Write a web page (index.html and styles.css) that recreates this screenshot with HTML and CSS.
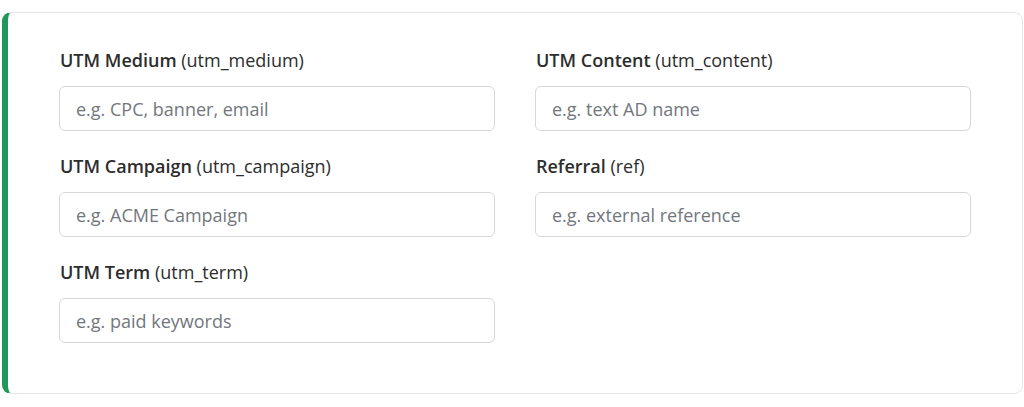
FILE: index.html
```html
<!DOCTYPE html>
<html lang="en">
<head>
    <meta charset="UTF-8">
    <meta name="viewport" content="width=device-width, initial-scale=1.0">
    <title>UTM Parameters</title>
    <link rel="stylesheet" href="styles.css">
</head>
<body>
    <div class="card">
        <form class="utm-form">
            <div class="field">
                <label for="utm_medium"><strong>UTM Medium</strong> (utm_medium)</label>
                <input type="text" id="utm_medium" placeholder="e.g. CPC, banner, email">
            </div>
            <div class="field">
                <label for="utm_content"><strong>UTM Content</strong> (utm_content)</label>
                <input type="text" id="utm_content" placeholder="e.g. text AD name">
            </div>
            <div class="field">
                <label for="utm_campaign"><strong>UTM Campaign</strong> (utm_campaign)</label>
                <input type="text" id="utm_campaign" placeholder="e.g. ACME Campaign">
            </div>
            <div class="field">
                <label for="ref"><strong>Referral</strong> (ref)</label>
                <input type="text" id="ref" placeholder="e.g. external reference">
            </div>
            <div class="field">
                <label for="utm_term"><strong>UTM Term</strong> (utm_term)</label>
                <input type="text" id="utm_term" placeholder="e.g. paid keywords">
            </div>
        </form>
    </div>
</body>
</html>
```

FILE: styles.css
```css
body {
    font-family: 'Open Sans', sans-serif;
    background-color: #ffffff;
    margin: 0;
    padding: 12px 1px 0 2px;
}
.card {
    background-color: #ffffff;
    border: 1px solid #e4e5e7;
    border-left: 6px solid #22965a;
    border-radius: 9px;
    padding: 35px 50px 50px 51px;
}
.utm-form {
    display: grid;
    grid-template-columns: 436px 436px;
    column-gap: 40px;
    row-gap: 23px;
}
.field {
    display: flex;
    flex-direction: column;
    gap: 14px;
}
label {
    font-size: 18px;
    line-height: 24px;
    color: #2d2d2d;
    padding-left: 1px;
}
label strong {
    font-weight: 600;
}
input {
    font-family: 'Open Sans', sans-serif;
    font-size: 18px;
    height: 45px;
    box-sizing: border-box;
    padding: 0 16px;
    border: 1px solid #d5d8db;
    border-radius: 6px;
    color: #333;
    outline: none;
}
input::placeholder {
    color: #72777d;
}
```
